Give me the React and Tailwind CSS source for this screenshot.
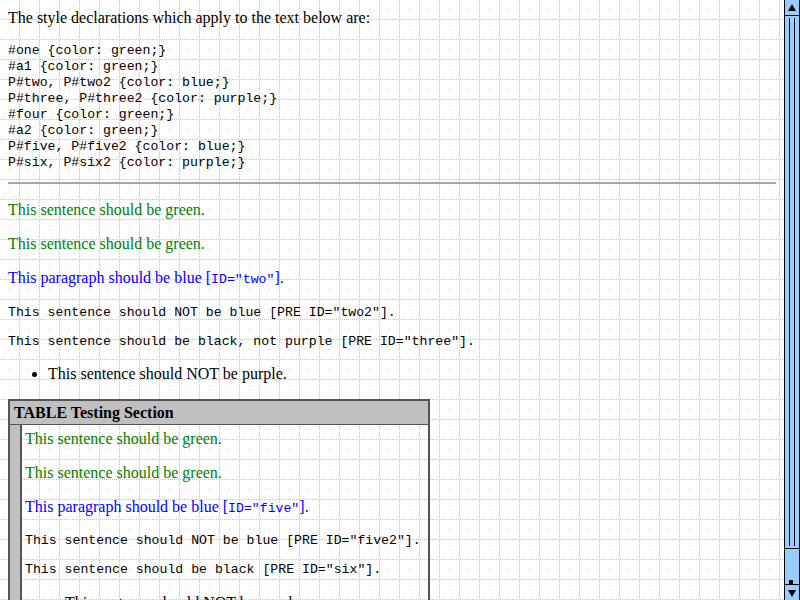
import React from 'react';

const serif = 'font-["Liberation_Serif",serif]';
const mono = 'font-["Liberation_Mono",monospace]';

const GridBackground = () => (
  <svg className="absolute inset-0 w-full h-full" aria-hidden="true">
    <defs>
      <pattern id="grid" width="20" height="20" patternUnits="userSpaceOnUse">
        {[0, 2, 4, 6, 8, 10, 12, 14, 16, 18].map((n) => (
          <React.Fragment key={n}>
            <rect x={n} y="19" width="1" height="1" fill="#c6c6c6" />
            <rect x="19" y={n} width="1" height="1" fill="#c6c6c6" />
          </React.Fragment>
        ))}
        <rect x="9" y="9" width="1" height="1" fill="#cccccc" />
      </pattern>
    </defs>
    <rect width="100%" height="100%" fill="url(#grid)" />
  </svg>
);

const Scrollbar = () => (
  <div className="w-4 h-[600px] shrink-0 bg-[#99ccff] border-x border-black flex flex-col relative z-10">
    <div className="h-4 shrink-0 border-b border-black flex items-center justify-center">
      <svg width="8" height="8" viewBox="0 0 8 8">
        <polygon points="4,0 8,7 0,7" fill="black" />
      </svg>
    </div>
    <div className="h-[533px] shrink-0 border-b border-black flex justify-center gap-1 pt-0.5 pb-0.5">
      <div className="w-px h-full bg-black" />
      <div className="w-px h-full bg-black" />
    </div>
    <div className="flex-1" />
    <div className="h-4 shrink-0 border-t border-black flex items-center justify-center relative">
      <div className="absolute -top-[5px] left-[4px] w-[4px] h-[4px] bg-black" />
      <svg width="8" height="8" viewBox="0 0 8 8">
        <polygon points="0,1 8,1 4,8" fill="black" />
      </svg>
    </div>
  </div>
);

const Tt = ({ children }) => <span className={`${mono} text-[13.2px]`}>{children}</span>;

const preCls = `${mono} text-[13.2px] leading-[16px]`;

export default function App() {
  return (
    <div className={`h-screen w-full overflow-hidden flex bg-white text-black ${serif} text-[16px] leading-[18px]`}>
      <div className="relative flex-1 overflow-hidden">
        <GridBackground />
        <div className="relative px-2 pt-[9px]">
          <p className="mb-4">The style declarations which apply to the text below are:</p>
          <pre className={`${preCls} mb-[11px]`}>
{`#one {color: green;}
#a1 {color: green;}
P#two, P#two2 {color: blue;}
P#three, P#three2 {color: purple;}
#four {color: green;}
#a2 {color: green;}
P#five, P#five2 {color: blue;}
P#six, P#six2 {color: purple;}`}
          </pre>
          <hr className="h-[2px] bg-[#a8a8a8] border-0" />
          <p className="mt-[17px] text-[#008000]">This sentence should be green.</p>
          <p className="mt-4 text-[#008000]">This sentence should be green.</p>
          <p className="mt-4 text-[#0000ff]">
            This paragraph should be blue [<Tt>ID="two"</Tt>].
          </p>
          <pre className={`${preCls} mt-4`}>This sentence should NOT be blue [PRE ID="two2"].</pre>
          <pre className={`${preCls} mt-[13px]`}>This sentence should be black, not purple [PRE ID="three"].</pre>
          <ul className="list-disc pl-10 mt-[15px]">
            <li>This sentence should NOT be purple.</li>
          </ul>
          <div className="w-[422px] mt-4 border-2 border-[#555555]">
            <div className="bg-[#c0c0c0] border-b border-[#555555] pl-1 pt-[3px] pb-[2px] font-bold">
              TABLE Testing Section
            </div>
            <div className="flex">
              <div className="w-[12px] shrink-0 bg-[#c0c0c0] border-r-2 border-[#555555]" />
              <div className="flex-1 pl-[3px] pt-[5px] pb-4">
                <p className="text-[#008000]">This sentence should be green.</p>
                <p className="mt-4 text-[#008000]">This sentence should be green.</p>
                <p className="mt-4 text-[#0000ff]">
                  This paragraph should be blue [<Tt>ID="five"</Tt>].
                </p>
                <pre className={`${preCls} mt-[15px]`}>This sentence should NOT be blue [PRE ID="five2"].</pre>
                <pre className={`${preCls} mt-[13px]`}>This sentence should be black [PRE ID="six"].</pre>
                <ul className="list-disc pl-10 mt-4">
                  <li>This sentence should NOT be purple.</li>
                </ul>
              </div>
            </div>
          </div>
        </div>
      </div>
      <Scrollbar />
    </div>
  );
}
